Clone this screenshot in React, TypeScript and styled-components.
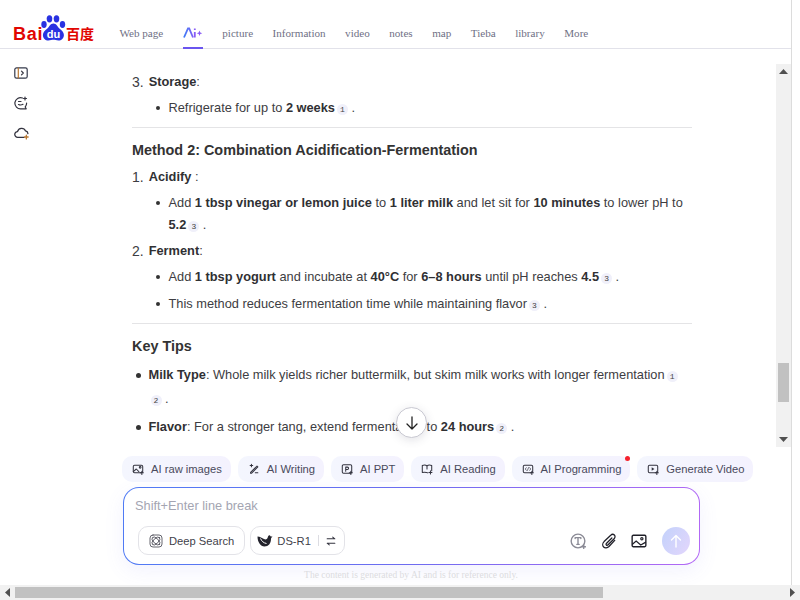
import React from "react";
import styled, { createGlobalStyle } from "styled-components";

const Global = createGlobalStyle`
  html, body { margin: 0; padding: 0; background: #fff; overflow: hidden; }
  * { box-sizing: border-box; }
`;

const Shell = styled.div`
  width: 800px; height: 600px; display: flex; flex-direction: column; overflow: hidden;
  font-family: "Liberation Sans", Arial, sans-serif; color: #333;
`;
const Viewport = styled.div`
  height: 585px; display: flex;
`;
const Page = styled.div`
  width: 792px; height: 585px; border-right: 1px solid #dcdcdc; display: flex; flex-direction: column;
`;
const Header = styled.header`
  height: 49px; flex: none; border-bottom: 1px solid #e2e2ea; display: flex; align-items: flex-end; padding-left: 13px;
`;
const Logo = styled.div`
  width: 81px; height: 28px; margin-bottom: 7px; display: flex; align-items: flex-end; color: #e10601; flex: none;
`;
const LogoLatin = styled.span`
  font: bold 18px/18px "Liberation Sans", sans-serif; letter-spacing: 0.7px; width: 28px; margin-bottom: -2px;
`;
const LogoPaw = styled.div`
  position: relative; width: 25px; height: 27px; flex: none;
`;
const LogoDu = styled.span`
  position: absolute; left: 4px; bottom: 1px; width: 17px; text-align: center; font: bold 11px/12px "Liberation Sans", sans-serif; color: #fff;
`;
const LogoCjk = styled.span`
  font: bold 14px/16px "Noto Sans CJK SC", sans-serif; margin-left: 0; margin-bottom: 0; white-space: nowrap;
`;
const Nav = styled.nav`
  display: flex; margin-left: 25.5px; gap: 19.5px; height: 100%; align-items: flex-end;
`;
const NavItem = styled.a<{ $active?: boolean }>`
  height: 48px; padding-top: 25px; font: 11.1px/14px "Liberation Serif", serif; color: #6f7085; white-space: nowrap; position: relative;
  border-bottom: 2px solid ${(p) => (p.$active ? "#6a55ef" : "transparent")};
  margin-bottom: -1px;
`;
const Main = styled.div`
  flex: 1; display: flex; min-height: 0; position: relative;
`;
const Side = styled.aside`
  width: 132px; flex: none; padding: 17px 0 0 14px; display: flex; flex-direction: column; gap: 15.5px;
`;
const Center = styled.div`
  flex: 1; display: flex; flex-direction: column; min-width: 0;
`;
const ScrollRow = styled.div`
  height: 383px; margin-top: 15px; flex: none; display: flex; position: relative;
`;
const Article = styled.article`
  width: 644px; padding-right: 84px; overflow: hidden; padding-top: 7px; font-size: 12.8px; line-height: 22px; color: #3d3d42;
  b { color: #303033; }
`;
const NumRow = styled.div<{ $mt?: number }>`
  display: flex; margin-top: ${(p) => p.$mt ?? 4}px; height: 22px;
`;
const NumMark = styled.span`
  width: 16.7px; font-size: 14px; flex: none;
`;
const SubRow = styled.div<{ $mt?: number }>`
  display: flex; margin-top: ${(p) => p.$mt ?? 4}px; padding-left: 24px;
`;
const Dot = styled.span`
  width: 12.5px; flex: none; position: relative;
  &::before { content: ""; position: absolute; left: 0; top: 9px; width: 4px; height: 4px; border-radius: 50%; background: #333; }
`;
const TipRow = styled.div<{ $mt?: number }>`
  display: flex; margin-top: ${(p) => p.$mt ?? 4}px; padding-left: 3.5px; line-height: 24px;
`;
const TipDot = styled(Dot)`
  width: 13px;
  &::before { top: 10px; width: 5px; height: 5px; }
`;
const Rule = styled.hr`
  border: 0; height: 1px; background: #e4e4e6; margin: 8px 0 0;
`;
const Heading = styled.h3`
  font-size: 14.4px; line-height: 24px; font-weight: bold; margin: 10px 0 0; color: #333;
`;
const Cite = styled.span`
  display: inline-block; width: 11px; height: 11px; border-radius: 50%; margin-left: 2px; background: #f0f0fa; vertical-align: 0;
  font: 8px/11px "Liberation Mono", monospace; text-align: center; color: #444;
`;
const Scrollbar = styled.div`
  width: 15px; height: 383px; margin-left: auto; background: #f1f1f1; position: relative; flex: none;
`;
const Arrow = styled.svg<{ $place: string }>`
  position: absolute; ${(p) => p.$place};
`;
const VThumb = styled.div`
  position: absolute; left: 2px; top: 299px; width: 11px; height: 39px; background: #c1c1c1;
`;
const DownBtn = styled.button`
  position: absolute; left: 264px; top: 343px; width: 31px; height: 31px; border-radius: 50%; padding: 0;
  background: #fff; border: 1px solid #c9c9d2; box-shadow: 0 2px 10px rgba(60,60,90,.15); display: flex; align-items: center; justify-content: center;
`;
const Composer = styled.section`
  margin-left: -10px; padding-top: 9px; display: flex; flex-direction: column;
`;
const Chips = styled.div`
  display: flex; gap: 6.9px; width: 640px;
`;
const Chip = styled.div`
  height: 26px; border-radius: 10px; padding: 0 9px 0 10px; background: linear-gradient(90deg, #f4f6fe, #f4f2fe); display: flex; align-items: center; gap: 7px;
  font-size: 11.2px; color: #4a4a5c; white-space: nowrap; position: relative; flex: none;
`;
const RedDot = styled.span`
  position: absolute; right: 0; top: 0; width: 5px; height: 5px; border-radius: 50%; background: #f5222d;
`;
const InputBox = styled.div`
  margin: 5px 0 0 1px; width: 577px; height: 78px; border-radius: 16px; border: 1px solid transparent;
  background: linear-gradient(#fff, #fff) padding-box, linear-gradient(100deg, #4f7bf5, #6d6cf0 50%, #b368f5) border-box;
  box-shadow: 0 6px 20px rgba(110,110,240,.09); display: flex; flex-direction: column; padding: 10px 9px 9px 11px;
`;
const Placeholder = styled.div`
  font-size: 12.8px; line-height: 16px; color: #a4a5b2;
`;
const Tools = styled.div`
  margin-top: auto; display: flex; align-items: center; padding-left: 3px; gap: 5px;
`;
const ToolBtn = styled.div`
  height: 29px; border: 1px solid #e3e3e8; border-radius: 10px; display: flex; align-items: center; padding: 0 10px; gap: 6px;
  font-size: 11.2px; color: #3f3f4a; white-space: nowrap; flex: none;
`;
const ModelBtn = styled(ToolBtn)`
  padding: 0 7px 0 6px; gap: 4px;
`;
const Divider = styled.span`
  width: 1px; height: 11px; background: #dcdce2; margin: 0 2px 0 3.5px;
`;
const Right = styled.div`
  margin-left: auto; display: flex; align-items: center;
`;
const RoundIcon = styled.span<{ $w: number }>`
  display: flex; width: ${(p) => p.$w}px;
`;
const Send = styled.div`
  width: 28px; height: 28px; border-radius: 50%; background: linear-gradient(120deg, #c3d2fb, #e3d6fc); display: flex; align-items: center; justify-content: center;
`;
const Foot = styled.div`
  margin-top: 4px; width: 577px; text-align: center; font: 9.5px/12px "Liberation Serif", serif; color: #dcdce0; padding-left: 1px;
`;
const HBar = styled.div`
  height: 15px; background: #f1f1f1; position: relative; flex: none;
`;
const HThumb = styled.div`
  position: absolute; left: 15px; top: 2px; width: 588px; height: 11px; background: #c1c1c1;
`;

const S = { fill: "none", stroke: "#33333f", strokeWidth: 1.2, strokeLinecap: "round" as const, strokeLinejoin: "round" as const };
const Sp = ({ x, y }: { x: number; y: number }) => <path d={`M${x - 1.8} ${y}h3.6M${x} ${y - 1.8}v3.6`} {...S} />;
const I = ({ children, size = 13 }: { children: React.ReactNode; size?: number }) => (
  <svg width={size} height={size} viewBox="0 0 14 14" style={{ flex: "none" }}>{children}</svg>
);

const Paw = () => (
  <svg width="25" height="27" viewBox="0 0 25 27" style={{ position: "absolute", left: 0, top: 0 }}>
    <g fill="#2932e1">
      <ellipse cx="3" cy="10.500" rx="2.700" ry="3.400" />
      <ellipse cx="8.500" cy="4.800" rx="2.800" ry="3.600" />
      <ellipse cx="15.500" cy="4.800" rx="2.800" ry="3.600" />
      <ellipse cx="21.500" cy="10.500" rx="2.700" ry="3.400" />
      <path d="M12.400 9.500c3 0 4 3 6 5 2.600 2 4.500 4 4.500 6.500 0 3.500-2.500 5.500-5.500 5.500-2 0-3.500-.7-5-.7s-3 .7-5 .7c-3 0-5.500-2-5.500-5.500 0-2.500 1.900-4.500 4.500-6.500 2-2 3-5 6-5z" />
    </g>
  </svg>
);

const ArrowUp = () => <svg width="9" height="5" viewBox="0 0 9 5"><path d="M4.500 0L9 5H0z" fill="#505050" /></svg>;

export default function App() {
  return (
    <Shell>
      <Global />
      <Viewport>
        <Page>
          <Header>
            <Logo>
              <LogoLatin>Bai</LogoLatin>
              <LogoPaw><Paw /><LogoDu>du</LogoDu></LogoPaw>
              <LogoCjk>百度</LogoCjk>
            </Logo>
            <Nav>
              <NavItem>Web page</NavItem>
              <NavItem $active>
                <svg width="20" height="14" viewBox="0 0 20 14">
                  <defs><linearGradient id="ai" x1="0" x2="1"><stop offset="0" stopColor="#3f7bf6" /><stop offset="1" stopColor="#8a5cf5" /></linearGradient></defs>
                  <path d="M1 11.500L5 2.500h1.200L10 11.500M11.800 6v5.500M11.800 2.500v1.500" fill="none" stroke="url(#ai)" strokeWidth="1.800" />
                  <path d="M16.500 4.500l.8 2 2 .8-2 .8-.8 2-.8-2-2-.8 2-.8z" fill="#8a5cf5" />
                </svg>
              </NavItem>
              <NavItem>picture</NavItem>
              <NavItem>Information</NavItem>
              <NavItem>video</NavItem>
              <NavItem>notes</NavItem>
              <NavItem>map</NavItem>
              <NavItem>Tieba</NavItem>
              <NavItem>library</NavItem>
              <NavItem>More</NavItem>
            </Nav>
          </Header>
          <Main>
            <Side>
              <I size={14}>
                <rect x="0.800" y="1.800" width="12.400" height="10.400" rx="1.800" {...S} stroke="#33384a" />
                <path d="M4.300 2v10" {...S} stroke="#b9772f" />
                <path d="M7.500 5.200L9.300 7 7.500 8.800" {...S} />
              </I>
              <I size={14}>
                <path d="M8.500 2A5.600 5.600 0 1 0 7 12.800H12.200L11.200 11A5.600 5.600 0 0 0 12.600 7" {...S} />
                <path d="M4.500 5.500h2.500M4.500 8.500c1.500.7 3 .7 4.500-.2" {...S} />
                <path d="M11 1v3M9.500 2.500h3" {...S} />
              </I>
              <I size={15}>
                <path d="M3.500 11.500A2.700 2.700 0 0 1 3.300 6.100 4 4 0 0 1 10.800 5.500 2.800 2.800 0 0 1 13 8M3.500 11.500h6" {...S} />
                <path d="M11.500 9.500v3.500M9.800 11.200h3.400" {...S} stroke="#b9772f" />
              </I>
            </Side>
            <Center>
              <ScrollRow>
                <Article>
                  <NumRow $mt={0}><NumMark>3.</NumMark><span><b>Storage</b>:</span></NumRow>
                  <SubRow><Dot /><span>Refrigerate for up to <b>2 weeks</b><Cite>1</Cite> .</span></SubRow>
                  <Rule />
                  <Heading>Method 2: Combination Acidification-Fermentation</Heading>
                  <NumRow><NumMark>1.</NumMark><span><b>Acidify</b> :</span></NumRow>
                  <SubRow><Dot /><span>Add <b>1 tbsp vinegar or lemon juice</b> to <b>1 liter milk</b> and let sit for <b>10 minutes</b> to lower pH to <b>5.2</b><Cite>3</Cite> .</span></SubRow>
                  <NumRow><NumMark>2.</NumMark><span><b>Ferment</b>:</span></NumRow>
                  <SubRow><Dot /><span>Add <b>1 tbsp yogurt</b> and incubate at <b>40°C</b> for <b>6–8 hours</b> until pH reaches <b>4.5</b><Cite>3</Cite> .</span></SubRow>
                  <SubRow $mt={5}><Dot /><span>This method reduces fermentation time while maintaining flavor<Cite>3</Cite> .</span></SubRow>
                  <Rule />
                  <Heading>Key Tips</Heading>
                  <TipRow $mt={5}><TipDot /><span><b>Milk Type</b>: Whole milk yields richer buttermilk, but skim milk works with longer fermentation<Cite>1</Cite> <Cite>2</Cite> .</span></TipRow>
                  <TipRow><TipDot /><span><b>Flavor</b>: For a stronger tang, extend fermentation to <b>24 hours</b><Cite>2</Cite> .</span></TipRow>
                </Article>
                <DownBtn aria-label="Scroll down">
                  <svg width="16" height="16" viewBox="0 0 16 16"><path d="M8 2v12M3 9l5 5 5-5" fill="none" stroke="#222" strokeWidth="1.300" strokeLinecap="round" strokeLinejoin="round" /></svg>
                </DownBtn>
                <Scrollbar>
                  <Arrow as="span" $place="left:3px;top:5px;display:flex;"><ArrowUp /></Arrow>
                  <VThumb />
                  <Arrow as="span" $place="left:3px;bottom:5px;display:flex;transform:rotate(180deg);"><ArrowUp /></Arrow>
                </Scrollbar>
              </ScrollRow>
              <Composer>
                <Chips>
                  <Chip>
                    <I size={12}><rect x="1.500" y="2.500" width="11" height="9" rx="1.500" {...S} /><circle cx="9.500" cy="5" r="1" {...S} /><path d="M1.500 10l3.500-3 3 3" {...S} /><Sp x={11.500} y={11.500} /></I>
                    AI raw images
                  </Chip>
                  <Chip>
                    <I size={12}><path d="M3 11l7.500-7.500 1 1L4 12H3zM8.500 11.500h3M2.500 3h3M4 1.500v3" {...S} /></I>
                    AI Writing
                  </Chip>
                  <Chip>
                    <I size={12}><rect x="1.500" y="2" width="11" height="10" rx="1.500" {...S} /><path d="M5.500 9.500V4.800h2a1.300 1.300 0 0 1 0 2.700h-2" {...S} /><Sp x={11.500} y={11.500} /></I>
                    AI PPT
                  </Chip>
                  <Chip>
                    <I size={12}><path d="M1.500 3c2-.8 4-.8 5.500.5C8.500 2.200 10.500 2.200 12.500 3v6M8 11.500c-1.800-.8-4-.8-6.500-.5V3M7 3.500V7" {...S} /><Sp x={11} y={11} /></I>
                    AI Reading
                  </Chip>
                  <Chip>
                    <I size={12}><rect x="1.500" y="2.500" width="11" height="9" rx="1.500" {...S} /><path d="M5 5.500L3.800 7 5 8.500M9 5.500L10.200 7 9 8.500M7.700 5.300L6.300 8.700" {...S} strokeWidth={0.8} /><Sp x={11.500} y={11.500} /></I>
                    AI Programming
                    <RedDot />
                  </Chip>
                  <Chip>
                    <I size={12}><rect x="1.500" y="2.500" width="11" height="9" rx="1.500" {...S} /><path d="M5.500 5v4l3.200-2z" fill="#33333f" /><Sp x={11.500} y={11.500} /></I>
                    Generate Video
                  </Chip>
                </Chips>
                <InputBox>
                  <Placeholder>Shift+Enter line break</Placeholder>
                  <Tools>
                    <ToolBtn>
                      <I size={14}><rect x="1" y="1" width="12" height="12" rx="3" {...S} stroke="#55555f" strokeWidth={0.9} /><ellipse cx="7" cy="7" rx="5" ry="2.500" transform="rotate(45 7 7)" {...S} stroke="#55555f" strokeWidth={0.9} /><ellipse cx="7" cy="7" rx="5" ry="2.500" transform="rotate(-45 7 7)" {...S} stroke="#55555f" strokeWidth={0.9} /></I>
                      Deep Search
                    </ToolBtn>
                    <ModelBtn>
                      <svg width="16" height="14" viewBox="0 0 16 14" style={{ flex: "none" }}>
                        <path d="M.5 2.500C3 2.500 5 4 7 5c2 1 3.500 0 4-2.500.5-1 1.500-1.500 2-1 .3 1 1 1 2.500 1-1 1-1.500 1.500-1.500 2.500 0 4.500-2.500 7.500-6.500 7.500C3.500 12.500.5 8 .5 2.500z" fill="#23232c" />
                        <path d="M3.500 4.500c1 2.500 3 4.500 6 5" fill="none" stroke="#fff" strokeWidth="1" />
                      </svg>
                      DS-R1
                      <Divider />
                      <I size={12}><path d="M2.500 4.500h9L9 2.500M11.500 9.500h-9L5 11.500" {...S} /></I>
                    </ModelBtn>
                    <Right>
                      <RoundIcon $w={31}>
                        <I size={16}><circle cx="7" cy="7" r="6" {...S} stroke="#8b8b96" /><path d="M4.500 4.800V4h5v.8M7 4v6M6 10h2" {...S} stroke="#8b8b96" /><path d="M12 10.500v3M10.500 12h3" {...S} stroke="#8b8b96" /></I>
                      </RoundIcon>
                      <RoundIcon $w={30}>
                        <I size={16}><path d="M12 6.500L7 11.800c-1.500 1.500-3.600 1.500-4.700.4-1.100-1.100-1.100-3.200.4-4.700L8.500 2c1-1 2.400-1 3.200-.2.800.8.800 2.200-.2 3.200L6.200 10.300c-.5.500-1.200.5-1.500.2-.3-.3-.3-1 .2-1.500L9.500 4.400" fill="none" stroke="#1f1f28" strokeWidth="1.100" strokeLinecap="round" /></I>
                      </RoundIcon>
                      <RoundIcon $w={31}>
                        <I size={16}><rect x="1" y="2" width="12" height="10" rx="1" fill="none" stroke="#1f1f28" strokeWidth="1.200" /><circle cx="9.500" cy="5" r="1" fill="none" stroke="#1f1f28" strokeWidth="1" /><path d="M1 10l3.500-3 4 3.500 4.500-2.500" fill="none" stroke="#1f1f28" strokeWidth="1.100" /></I>
                      </RoundIcon>
                      <Send>
                        <svg width="14" height="14" viewBox="0 0 14 14"><path d="M7 13V1.500M2.500 6L7 1.500 11.500 6" fill="none" stroke="#fff" strokeWidth="1.400" strokeLinecap="round" strokeLinejoin="round" /></svg>
                      </Send>
                    </Right>
                  </Tools>
                </InputBox>
                <Foot>The content is generated by AI and is for reference only.</Foot>
              </Composer>
            </Center>
          </Main>
        </Page>
      </Viewport>
      <HBar>
        <Arrow as="span" $place="left:3px;top:5px;display:flex;transform:rotate(-90deg);"><ArrowUp /></Arrow>
        <HThumb />
        <Arrow as="span" $place="right:3px;top:5px;display:flex;transform:rotate(90deg);"><ArrowUp /></Arrow>
      </HBar>
    </Shell>
  );
}
